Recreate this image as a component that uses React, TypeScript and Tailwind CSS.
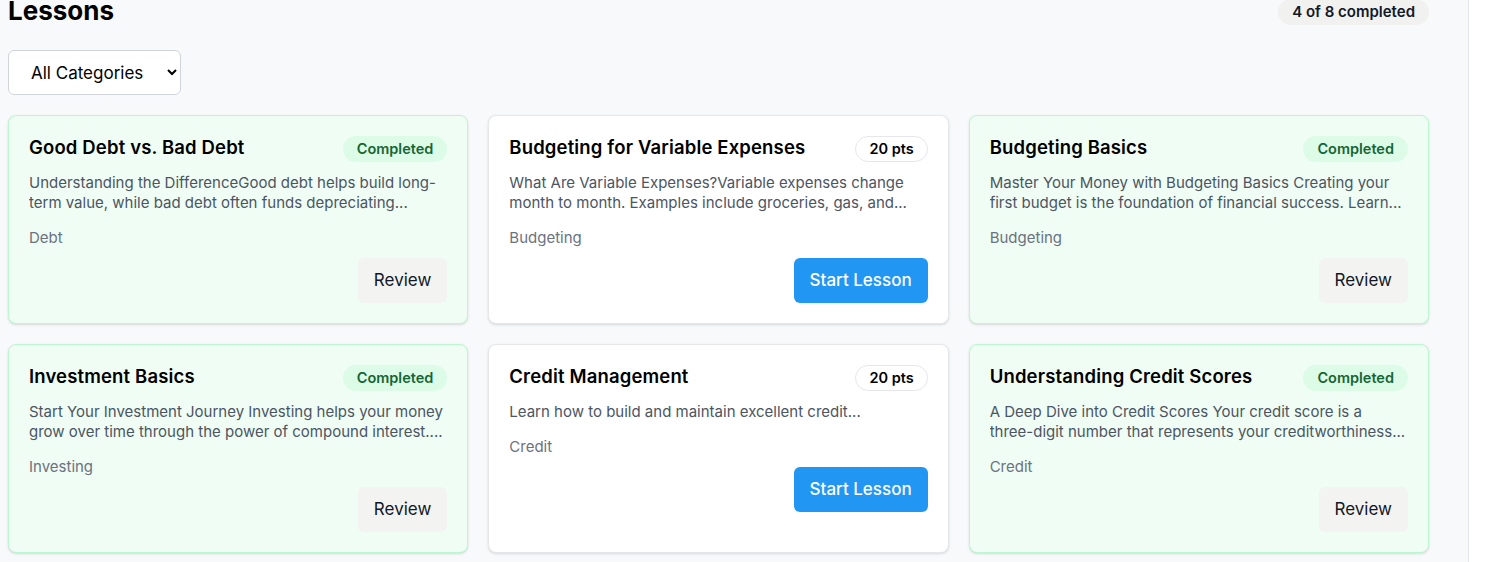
import { useState } from 'react';

type Lesson = {
  id: number;
  title: string;
  description: string;
  category: string;
  completed: boolean;
  points: number;
};

const lessons: Lesson[] = [
  {
    id: 1,
    title: 'Good Debt vs. Bad Debt',
    description:
      'Understanding the DifferenceGood debt helps build long-term value, while bad debt often funds depreciating...',
    category: 'Debt',
    completed: true,
    points: 20,
  },
  {
    id: 2,
    title: 'Budgeting for Variable Expenses',
    description:
      'What Are Variable Expenses?Variable expenses change month to month. Examples include groceries, gas, and...',
    category: 'Budgeting',
    completed: false,
    points: 20,
  },
  {
    id: 3,
    title: 'Budgeting Basics',
    description:
      'Master Your Money with Budgeting Basics Creating your first budget is the foundation of financial success. Learn...',
    category: 'Budgeting',
    completed: true,
    points: 20,
  },
  {
    id: 4,
    title: 'Investment Basics',
    description:
      'Start Your Investment Journey Investing helps your money grow over time through the power of compound interest....',
    category: 'Investing',
    completed: true,
    points: 20,
  },
  {
    id: 5,
    title: 'Credit Management',
    description: 'Learn how to build and maintain excellent credit...',
    category: 'Credit',
    completed: false,
    points: 20,
  },
  {
    id: 6,
    title: 'Understanding Credit Scores',
    description:
      'A Deep Dive into Credit Scores Your credit score is a three-digit number that represents your creditworthiness...',
    category: 'Credit',
    completed: true,
    points: 20,
  },
];

const heading = { fontFamily: 'Inter, "Noto Sans", sans-serif' };

function LessonCard({ lesson }: { lesson: Lesson }) {
  return (
    <div
      className={
        lesson.completed
          ? 'flex flex-col rounded-lg border border-[#bbf7d0] bg-[#f0fdf4] p-5 shadow-sm'
          : 'flex flex-col rounded-lg border border-[#e5e7eb] bg-white p-5 shadow-sm'
      }
    >
      <div className="flex items-start justify-between gap-3">
        <h3 className="text-[18.5px] font-semibold leading-[22px] tracking-[0.15px] text-black" style={heading}>
          {lesson.title}
        </h3>
        {lesson.completed ? (
          <span className="shrink-0 rounded-full bg-[#dcfce7] px-[14px] py-[3px] text-[14.5px] font-semibold leading-[20px] text-[#166534]">
            Completed
          </span>
        ) : (
          <span className="shrink-0 rounded-full border border-[#e5e7eb] bg-white px-[13px] py-[2px] text-[14.5px] font-semibold leading-[20px] text-black">
            {lesson.points} pts
          </span>
        )}
      </div>
      <p className="mt-[11px] line-clamp-2 text-[15px] leading-[20px] text-[#4b5563]">{lesson.description}</p>
      <div className="mt-[15px] text-[15px] leading-[20px] text-[#6b7280]">{lesson.category}</div>
      <div className="mt-[10px] flex justify-end">
        {lesson.completed ? (
          <button className="h-[45px] rounded-md bg-[#f3f3f2] px-4 text-[17px] text-[#111827]">Review</button>
        ) : (
          <button className="h-[45px] rounded-md bg-[#2196f3] px-4 text-[17px] font-medium text-white">
            Start Lesson
          </button>
        )}
      </div>
    </div>
  );
}

export default function App() {
  const [categoria, setCategoria] = useState('all');
  const done = lessons.filter((l) => l.completed).length;

  return (
    <div className="flex h-[562px] overflow-hidden bg-white" style={{ fontFamily: 'Inter, "Noto Sans", sans-serif' }}>
      <div className="w-[1469px] shrink-0 border-r border-[#e5e7eb] bg-[#f8f9fa] pl-2 pr-[39px]">
        <div className="-mt-[5px] flex items-center justify-between">
          <h2 className="text-[26px] font-bold leading-[32px] text-black" style={heading}>
            Lessons
          </h2>
          <span className="mt-[2px] rounded-full bg-[#f1f1ef] px-[14px] py-[3px] text-[15px] font-semibold leading-[20px] text-[#111827]">
            {done} of 8 completed
          </span>
        </div>
        <select
          value={categoria}
          onChange={(e) => setCategoria(e.target.value)}
          className="mt-[23px] h-[45px] w-[173px] rounded-md border border-[#d1d5db] bg-white pl-[18px] pr-2 text-[17px] text-black"
        >
          <option value="all">All Categories</option>
          <option value="debt">Debt</option>
          <option value="budgeting">Budgeting</option>
          <option value="investing">Investing</option>
          <option value="credit">Credit</option>
        </select>
        <div className="mt-5 grid grid-cols-3 gap-5">
          {lessons.map((lesson) => (
            <LessonCard key={lesson.id} lesson={lesson} />
          ))}
        </div>
      </div>
      <div className="flex-1 bg-white" />
    </div>
  );
}
